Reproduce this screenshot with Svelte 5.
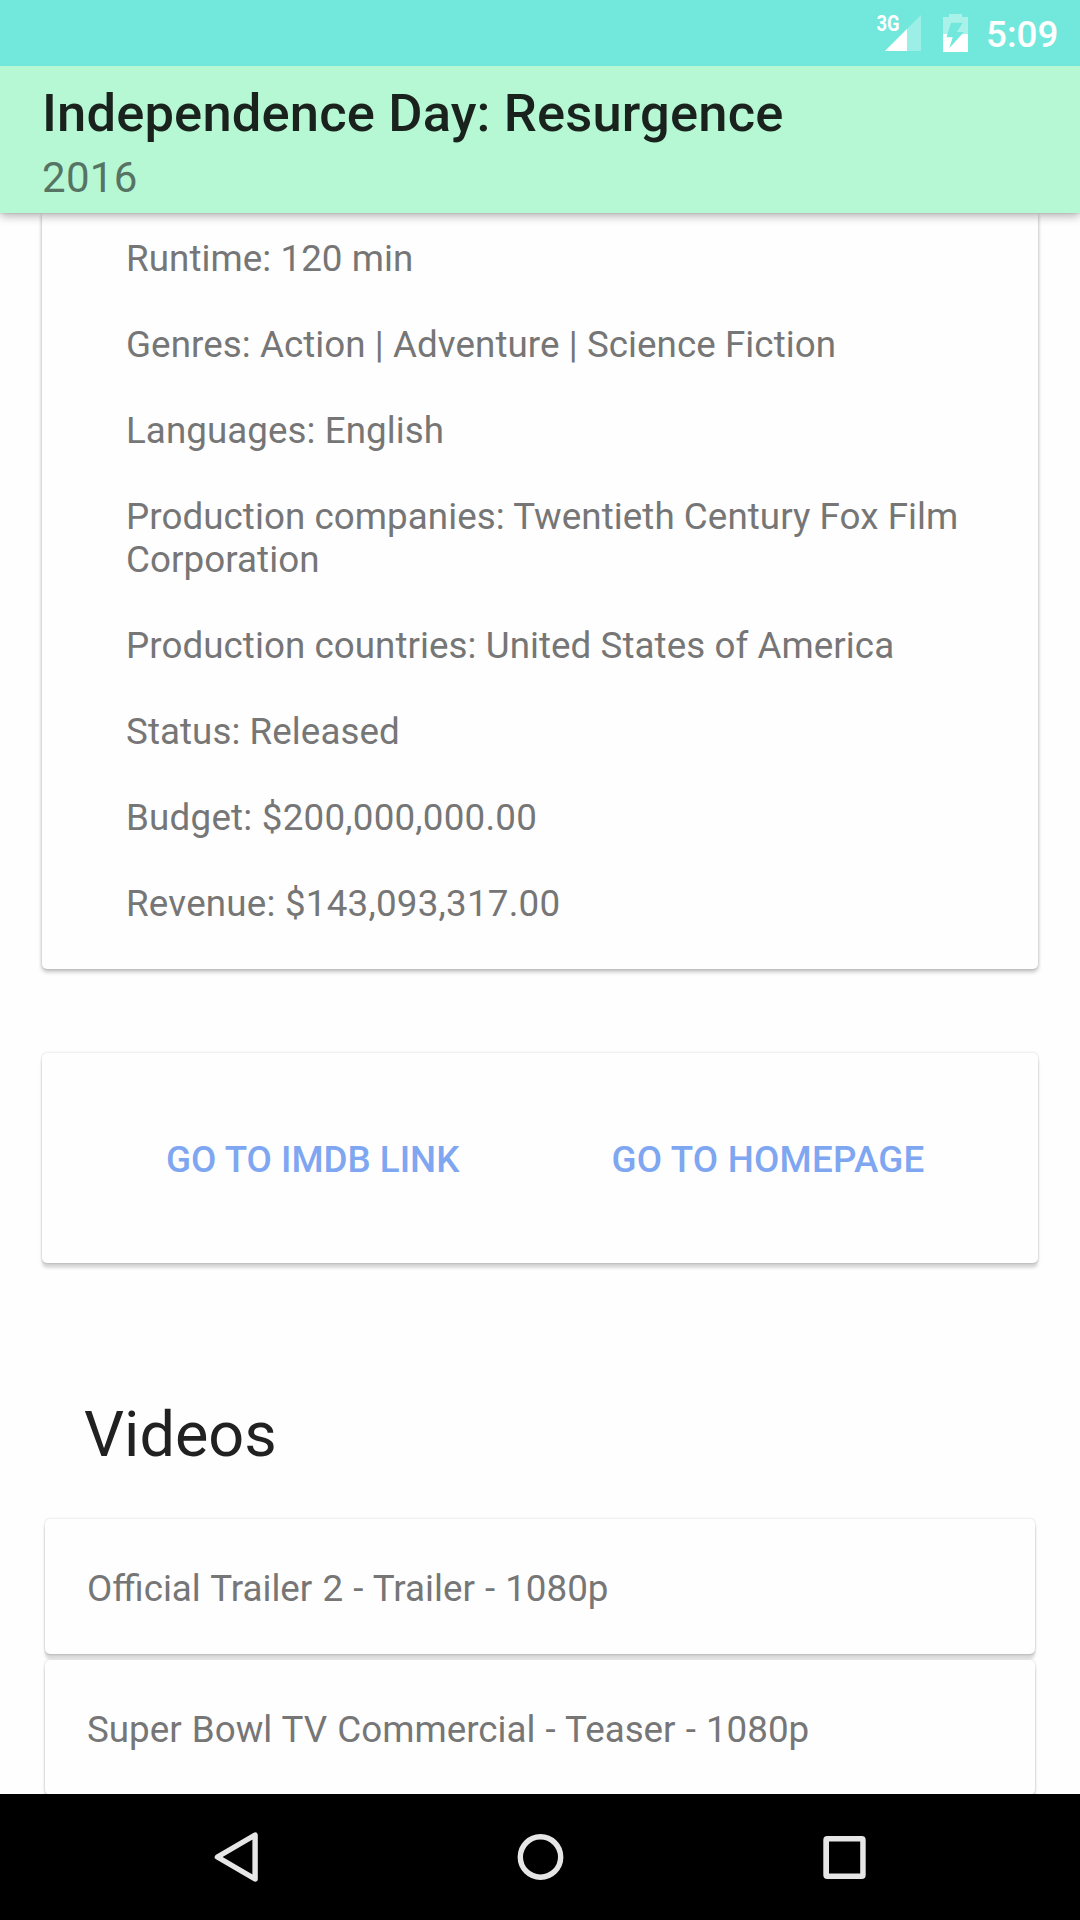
<script>
  const details = [
    { text: 'Runtime: 120 min' },
    { text: 'Genres: Action | Adventure | Science Fiction' },
    { text: 'Languages: English' },
    { text: 'Production companies: Twentieth Century Fox Film Corporation' },
    { text: 'Production countries: United States of America' },
    { text: 'Status: Released' },
    { text: 'Budget: $200,000,000.00', amount: true },
    { text: 'Revenue: $143,093,317.00', amount: true },
  ];
  const videos = [
    'Official Trailer 2 - Trailer - 1080p',
    'Super Bowl TV Commercial - Teaser - 1080p',
  ];
</script>

<div class="screen">
  <div class="status">
    <svg class="signal" width="51" height="50" viewBox="872 4 51 50" aria-hidden="true">
      <path d="M921 15V51H885Z" fill="#fff" fill-opacity=".3" />
      <path d="M907 29V51H885Z" fill="#fff" />
      <text x="876.5" y="31" textLength="23" lengthAdjust="spacingAndGlyphs">3G</text>
    </svg>
    <svg class="battery" width="26" height="50" viewBox="943 4 26 50" aria-hidden="true">
      <mask id="bolt" maskUnits="userSpaceOnUse" x="943" y="4" width="26" height="50">
        <rect x="943" y="4" width="26" height="50" fill="#fff" />
        <path d="M951 22.7H962.7L957 32H963.9L949.3 48.2L952.7 37.2H946.5Z" fill="#000" />
      </mask>
      <g mask="url(#bolt)" fill="#fff">
        <path d="M943 17H949V14H962V17H968V34H943Z" fill-opacity=".4" />
        <path d="M943 34H968V52H943Z" />
      </g>
    </svg>
    <span class="clock">5:09</span>
  </div>

  <header>
    <h1>Independence Day: Resurgence</h1>
    <p>2016</p>
  </header>

  <main>
    <section class="card details">
      {#each details as line}
        <p class:amount={line.amount}>{line.text}</p>
      {/each}
    </section>

    <section class="card links">
      <button>GO TO IMDB LINK</button>
      <button class="home">GO TO HOMEPAGE</button>
    </section>

    <h2>Videos</h2>
    <div class="videos">
      {#each videos as video}
        <div class="card video">{video}</div>
      {/each}
    </div>
  </main>

  <nav>
    <svg width="1080" height="126" viewBox="0 1794 1080 126" fill="none" stroke="#e6e6e6" stroke-width="5.4" aria-hidden="true">
      <path d="M217.4 1857L255.1 1835V1879Z" stroke-linejoin="round" />
      <circle cx="540.5" cy="1857" r="20.2" />
      <path fill="#e6e6e6" stroke="none" fill-rule="evenodd" d="M827.3 1836H861.7A4 4 0 0 1 865.7 1840V1875A4 4 0 0 1 861.7 1879H827.3A4 4 0 0 1 823.3 1875V1840A4 4 0 0 1 827.3 1836ZM829 1841.5V1873.4H860.2V1841.5Z" />
    </svg>
  </nav>
</div>

<style>
  .screen {
    width: 1080px;
    height: 1920px;
    overflow: hidden;
    display: flex;
    flex-direction: column;
    background: #fefefe;
    font-family: Roboto, sans-serif;
    font-size: 36.75px;
    line-height: 43px;
    color: #767676;
  }
  h1, h2, p { margin: 0; }
  .status {
    flex: none;
    box-sizing: border-box;
    height: 66px;
    background: #72e8dc;
    display: flex;
    justify-content: flex-end;
    align-items: flex-start;
    padding: 4px 22px 0 0;
  }
  .signal { margin-right: 20px; }
  .signal text { font: 700 22.5px Roboto, sans-serif; fill: #fff; }
  .battery { margin-right: 17px; }
  .clock { width: 72px; font-weight: 500; font-size: 36.75px; line-height: 40px; padding-top: 11px; color: #fff; white-space: nowrap; }
  header {
    flex: none;
    box-sizing: border-box;
    height: 147px;
    padding: 16px 42px 0;
    background: #b7f8d4;
    box-shadow: 0 3px 9px rgba(0, 0, 0, .3), 0 0 2px rgba(0, 0, 0, .15);
    clip-path: inset(0 0 -20px 0);
    z-index: 1;
  }
  h1 { font-size: 52.5px; font-weight: 500; line-height: 62px; letter-spacing: .16px; color: #1a221e; white-space: nowrap; }
  header p { font-size: 42px; line-height: 49px; margin-top: 9px; letter-spacing: .3px; color: #567463; }
  main { flex: 1; min-height: 0; overflow: hidden; padding: 0 42px; }
  .card {
    background: #fefefe;
    border-radius: 5px;
    box-shadow: 0 3px 4px rgba(0, 0, 0, .24), 0 0 3px rgba(0, 0, 0, .15);
  }
  .details {
    box-sizing: border-box;
    height: 756px;
    padding: 24px 70px 0 84px;
    border-radius: 0 0 5px 5px;
    display: flex;
    flex-direction: column;
    gap: 43px;
    letter-spacing: .06px;
  }
  .amount { letter-spacing: .22px; }
  .links {
    box-sizing: border-box;
    height: 210px;
    margin-top: 84px;
    padding: 3px 0 0 124px;
    display: flex;
    align-items: center;
    gap: 152px;
  }
  button {
    border: 0;
    padding: 0;
    background: none;
    font: 500 36.75px/43px Roboto, sans-serif;
    color: #7fa6f0;
    white-space: nowrap;
  }
  .home { letter-spacing: .23px; }
  h2 { font-size: 63px; font-weight: 400; line-height: 74px; color: #212121; margin: 135px 0 47px 42px; }
  .videos { padding: 0 3px; display: flex; flex-direction: column; gap: 6px; word-spacing: 1px; }
  .video { box-sizing: border-box; height: 135px; padding: 48px 42px 0; }
  .links, .video { box-shadow: 0 5px 3px rgba(0, 0, 0, .15), 0 1px 2px rgba(0, 0, 0, .07), 0 0 3px rgba(0, 0, 0, .15); }
  nav { flex: none; height: 126px; background: #000; z-index: 1; }
  svg { display: block; }
</style>
